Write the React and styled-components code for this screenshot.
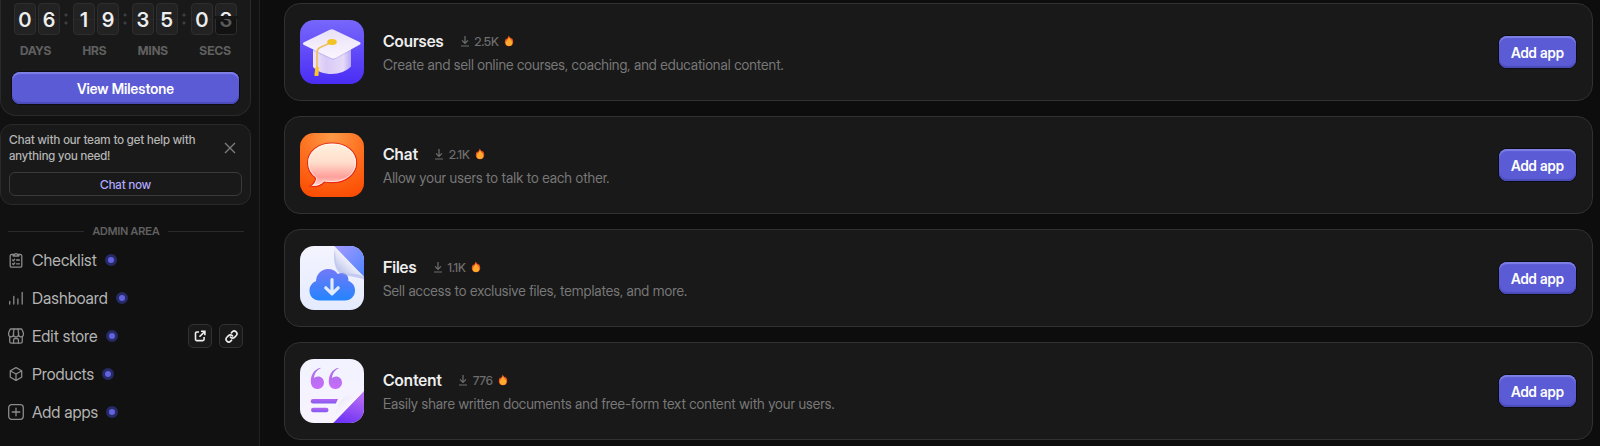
import React from 'react';
import styled, { createGlobalStyle } from 'styled-components';

const GlobalStyle = createGlobalStyle`
	* {
		box-sizing: border-box;
	}
	body {
		margin: 0;
		background: #0d0d0d;
		color: #eeeeee;
		font-family: 'Inter Display', Inter, 'Liberation Sans', sans-serif;
		font-variation-settings: 'opsz' 32;
	}
	button {
		font: inherit;
		font-variation-settings: inherit;
		cursor: pointer;
		padding: 0;
		margin: 0;
	}
	h2, p {
		margin: 0;
	}
	svg {
		display: block;
		flex: none;
	}
`;

const countdown = [
	{ label: 'DAYS', digits: ['0', '6'] },
	{ label: 'HRS', digits: ['1', '9'] },
	{ label: 'MINS', digits: ['3', '5'] },
	{ label: 'SECS', digits: ['0', '3'] },
];

const links = [
	{ name: 'Checklist', Icon: ChecklistIcon },
	{ name: 'Dashboard', Icon: DashboardIcon },
	{ name: 'Edit store', Icon: StoreIcon, tools: true },
	{ name: 'Products', Icon: BoxIcon },
	{ name: 'Add apps', Icon: PlusIcon },
];

const apps = [
	{
		name: 'Courses',
		installs: '2.5K',
		text: 'Create and sell online courses, coaching, and educational content.',
		Art: CoursesArt,
	},
	{
		name: 'Chat',
		installs: '2.1K',
		text: 'Allow your users to talk to each other.',
		Art: ChatArt,
	},
	{
		name: 'Files',
		installs: '1.1K',
		text: 'Sell access to exclusive files, templates, and more.',
		Art: FilesArt,
	},
	{
		name: 'Content',
		installs: '776',
		text: 'Easily share written documents and free-form text content with your users.',
		Art: ContentArt,
	},
];

export default function App() {
	return (
		<React.Fragment>
			<GlobalStyle />
			<Page>
				<Sidebar>
					<Milestone>
						<Clock>
							{countdown.map((unit, i) => (
								<React.Fragment key={unit.label}>
									{i > 0 && <Colon />}
									<Digits>
										{unit.digits.map((d, j) => (
											<Digit key={j} $flipping={i === 3 && j === 1}>
												{d}
											</Digit>
										))}
									</Digits>
								</React.Fragment>
							))}
						</Clock>
						<UnitLabels>
							{countdown.map((unit) => (
								<span key={unit.label}>{unit.label}</span>
							))}
						</UnitLabels>
						<PrimaryButton type="button">View Milestone</PrimaryButton>
					</Milestone>
					<Help>
						<HelpTop>
							<HelpText>
								Chat with our team to get help with anything you need!
							</HelpText>
							<CloseButton type="button" aria-label="Close">
								<svg width="12" height="12" viewBox="0 0 12 12" stroke="#7b7b7b" strokeWidth="1.4">
									<path d="M1 1l10 10M11 1L1 11" />
								</svg>
							</CloseButton>
						</HelpTop>
						<OutlineButton type="button">Chat now</OutlineButton>
					</Help>
					<Divider>ADMIN AREA</Divider>
					<Nav>
						{links.map(({ name, Icon, tools }) => (
							<NavRow key={name}>
								<NavLink href="#">
									<Icon />
									{name}
									<Dot />
								</NavLink>
								{tools && (
									<Tools>
										<ToolButton type="button" aria-label="Open store">
											<OpenIcon />
										</ToolButton>
										<ToolButton type="button" aria-label="Copy link">
											<ChainIcon />
										</ToolButton>
									</Tools>
								)}
							</NavRow>
						))}
					</Nav>
				</Sidebar>
				<Main>
					{apps.map(({ name, installs, text, Art }) => (
						<AppCard key={name}>
							<Art />
							<AppInfo>
								<AppHead>
									<AppName>{name}</AppName>
									<Installs>
										<DownloadIcon />
										{installs}
										<FlameIcon />
									</Installs>
								</AppHead>
								<AppText>{text}</AppText>
							</AppInfo>
							<PrimaryButton type="button">Add app</PrimaryButton>
						</AppCard>
					))}
				</Main>
			</Page>
		</React.Fragment>
	);
}

function NavSvg({ children }) {
	return (
		<svg
			width="16"
			height="16"
			viewBox="0 0 16 16"
			fill="none"
			stroke="#8a8a8a"
			strokeWidth="1.3"
			strokeLinecap="round"
			strokeLinejoin="round"
		>
			{children}
		</svg>
	);
}

function ChecklistIcon() {
	return (
		<NavSvg>
			<path d="M5 2.5H3.5A1.3 1.3 0 0 0 2.2 3.8v10.1a1.3 1.3 0 0 0 1.3 1.3h9a1.3 1.3 0 0 0 1.3-1.3V3.8a1.3 1.3 0 0 0-1.3-1.3H11" />
			<path d="M5.2 4V2.5h1.4a1.5 1.5 0 0 1 2.8 0h1.4V4z" />
			<path d="M4.6 8l.8.8 1.3-1.6M8.6 8h2.8M4.6 11.8l.8.8L6.7 11M8.6 11.8h2.8" />
		</NavSvg>
	);
}

function DashboardIcon() {
	return (
		<NavSvg>
			<path d="M1.7 11.5V14M5.8 6.5V14M9.9 9v5M14.2 2.3V14" />
		</NavSvg>
	);
}

function StoreIcon() {
	return (
		<NavSvg>
			<path d="M3 1h10a1.3 1.3 0 0 1 1.2.9L15.4 5v1.2a2.4 2.4 0 0 1-4.9.3 2.5 2.5 0 0 1-5 0A2.4 2.4 0 0 1 .6 6.2V5l1.2-3.1A1.3 1.3 0 0 1 3 1z" />
			<path d="M5.5 6.5V4.8L6 1M10.5 6.5V4.8L10 1" />
			<path d="M1.7 8.5v5a1.7 1.7 0 0 0 1.7 1.7h9.2a1.7 1.7 0 0 0 1.7-1.7v-5" />
			<path d="M5.6 15v-3.300a1 1 0 0 1 1-1h2.800a1 1 0 0 1 1 1V15" />
		</NavSvg>
	);
}

function BoxIcon() {
	return (
		<NavSvg>
			<path d="M8 1.6l5.7 3.2v6.4L8 14.4l-5.700-3.200V4.800z" />
			<path d="M2.5 5L8 8l5.500-3M8 8v6.300" />
		</NavSvg>
	);
}

function PlusIcon() {
	return (
		<NavSvg>
			<rect x=".7" y=".7" width="14.6" height="14.6" rx="3" />
			<path d="M8 4.200v7.600M4.200 8h7.600" />
		</NavSvg>
	);
}

function OpenIcon() {
	return (
		<svg width="12" height="12" viewBox="0 0 12 12" fill="none" stroke="#eeeeee" strokeWidth="1.6">
			<path d="M5 2H2.800A1.300 1.300 0 0 0 1.500 3.300v6a1.300 1.300 0 0 0 1.300 1.300h6a1.300 1.300 0 0 0 1.300-1.300V7M7 1.300h3.900v3.900M10.600 1.600L5.500 6.800" />
		</svg>
	);
}

function ChainIcon() {
	return (
		<svg
			width="13"
			height="13"
			viewBox="0 0 24 24"
			fill="none"
			stroke="#eeeeee"
			strokeWidth="3"
			strokeLinecap="round"
		>
			<path d="M10 13a5 5 0 0 0 7.540.540l3-3a5 5 0 0 0-7.070-7.070l-1.720 1.710" />
			<path d="M14 11a5 5 0 0 0-7.540-.540l-3 3a5 5 0 0 0 7.070 7.070l1.710-1.710" />
		</svg>
	);
}

function DownloadIcon() {
	return (
		<svg width="10" height="12" viewBox="0 0 10 12" fill="none" stroke="#6e6e6e" strokeWidth="1.2">
			<path d="M5 1v7M2 5.300l3 3 3-3M1 11h8" />
		</svg>
	);
}

function FlameIcon() {
	return (
		<svg width="10" height="12" viewBox="0 0 10 12">
			<path
				d="M4.700.500C5.200 1.800 6.500 2.600 7.300 3.700 7.500 3.400 7.600 3 7.600 2.700 8.700 4 9.300 5.600 9.200 7.300 9 9.700 7.300 11.300 5 11.300S.900 9.700.800 7.400C.7 5.600 1.500 4.300 2.300 3.200c.1.500.300.800.5 1.100C3.400 3.200 4.500 2.100 4.700.500z"
				fill="#f4591f"
			/>
			<path
				d="M5 2.600c.4 1.500 3.200 2.500 3.200 5.200A3.200 3.200 0 0 1 5 11 3.200 3.200 0 0 1 1.800 7.800C1.800 5.400 4.500 4.600 5 2.600z"
				fill="#ffab2e"
			/>
		</svg>
	);
}

function CoursesArt() {
	return (
		<svg width="64" height="64" viewBox="0 0 64 64">
			<defs>
				<linearGradient id="coursesBg" x1="0" y1="0" x2="0" y2="1">
					<stop offset="0" stopColor="#7767fb" />
					<stop offset="1" stopColor="#4a2df5" />
				</linearGradient>
				<linearGradient id="capSide" x1="0" y1="0" x2="1" y2="0">
					<stop offset="0" stopColor="#f0e4fb" />
					<stop offset=".35" stopColor="#d8caf6" />
					<stop offset=".8" stopColor="#e6daf9" />
					<stop offset="1" stopColor="#b9a8f5" />
				</linearGradient>
				<linearGradient id="capTop" x1="0" y1="0" x2="0" y2="1">
					<stop offset="0" stopColor="#e8e1f7" />
					<stop offset="1" stopColor="#fbf5ff" />
				</linearGradient>
			</defs>
			<rect width="64" height="64" rx="14" fill="url(#coursesBg)" />
			<path d="M13 30v17c4 4.500 11 7 18.500 7S47 51 51 46.500V27z" fill="url(#capSide)" />
			<path d="M13 31l20 9 18-9v-5H13z" fill="#a393ea" opacity=".4" />
			<path
				d="M29.800 9.700q2-.9 4 0L59.500 22q2.300 1.300 0 2.700L36 37.700q-2.800 1.400-5.600 0L4 25q-2.300-1.300 0-2.700z"
				fill="url(#capTop)"
			/>
			<path d="M31 22.500L20 27.500q-3 1.600-3 5V50" fill="none" stroke="#edc263" strokeWidth="1.8" />
			<ellipse cx="32" cy="22" rx="4.800" ry="3" fill="#f3c324" />
			<path d="M15.400 47h3.500l-.3 8.500q-2 1-4.300 0z" fill="#f8c52b" />
		</svg>
	);
}

function ChatArt() {
	return (
		<svg width="64" height="64" viewBox="0 0 64 64">
			<defs>
				<radialGradient id="chatBg" cx=".5" cy=".05" r="1">
					<stop offset="0" stopColor="#ff9a47" />
					<stop offset=".5" stopColor="#fd701f" />
					<stop offset="1" stopColor="#fb4c02" />
				</radialGradient>
				<linearGradient id="bubble" x1="0" y1="0" x2="0" y2="1">
					<stop offset="0" stopColor="#fff3df" />
					<stop offset=".45" stopColor="#ffddcb" />
					<stop offset=".78" stopColor="#ffa09b" />
					<stop offset="1" stopColor="#ffd8cf" />
				</linearGradient>
			</defs>
			<rect width="64" height="64" rx="14" fill="url(#chatBg)" />
			<path
				d="M32 10C18 10 7.500 18.500 7.500 29.500c0 7 3 12 8 15.500 0 3.500-2 6-5.500 8 5.500 1.500 11-.3 14.500-4q3.600.7 7.500.7c14.500 0 24.700-8.700 24.700-20S46.500 10 32 10z"
				fill="url(#bubble)"
				stroke="#e92b13"
				strokeWidth="1.2"
			/>
			<path
				d="M32 11.200C19 11.200 8.700 19 8.700 29.500c0 6.500 3 11.500 8 15.200 0 3-1.200 5.400-3.400 7.400 4.500.3 7.800-1.300 10.700-4.300q3.700.8 8 .8c13.500 0 23.500-8.200 23.500-18.800S45.500 11.200 32 11.200z"
				fill="none"
				stroke="#fff"
				strokeOpacity=".6"
			/>
		</svg>
	);
}

function FilesArt() {
	return (
		<svg width="64" height="64" viewBox="0 0 64 64">
			<defs>
				<linearGradient id="filesBg" x1="0" y1="0" x2="0" y2="1">
					<stop offset="0" stopColor="#f4f4ff" />
					<stop offset="1" stopColor="#e4ebfe" />
				</linearGradient>
				<linearGradient id="filesCorner" x1="0" y1="0" x2="1" y2="1">
					<stop offset="0" stopColor="#a59bff" />
					<stop offset="1" stopColor="#4d83ff" />
				</linearGradient>
				<linearGradient id="filesFold" x1=".6" y1=".4" x2=".2" y2=".85">
					<stop offset="0" stopColor="#fafaff" />
					<stop offset=".5" stopColor="#dfe2f6" />
					<stop offset="1" stopColor="#bcc3ea" />
				</linearGradient>
				<linearGradient id="cloud" x1="0" y1="0" x2="0" y2="1">
					<stop offset="0" stopColor="#7379f7" />
					<stop offset="1" stopColor="#2384fe" />
				</linearGradient>
				<clipPath id="filesClip">
					<rect width="64" height="64" rx="14" />
				</clipPath>
			</defs>
			<g clipPath="url(#filesClip)">
				<rect width="64" height="64" fill="url(#filesBg)" />
				<path d="M34 0h30v31z" fill="url(#filesCorner)" />
				<path
					d="M19.500 54.500C13.500 54.500 9.500 50 9.500 44.700c0-4.700 2.800-8.200 6.500-9.400C16.300 28 21.500 23 28 23c4.200 0 7.600 1.700 9.800 5 1.700-.7 3.300-1 4.700-.9 3.700.2 6.300 3.300 5.900 8 4 1.300 6.600 5 6.600 9.400 0 5.500-4 10-10 10z"
					fill="url(#cloud)"
				/>
				<path d="M34.500 4c-1 9-.5 16 3.500 21.500 5 6 14 3.500 26 8v-4L42 10z" fill="#8f9be0" opacity=".45" />
				<path d="M34 0l30 31c-8-5-15-2-21-4.500C34.500 22 36.500 10 34 0z" fill="url(#filesFold)" />
				<path
					d="M32 33.500V47M25.800 41.800l6.200 6 6.200-6"
					fill="none"
					stroke="#e2ebff"
					strokeWidth="3.2"
					strokeLinecap="round"
					strokeLinejoin="round"
				/>
			</g>
		</svg>
	);
}

function ContentArt() {
	return (
		<svg width="64" height="64" viewBox="0 0 64 64">
			<defs>
				<linearGradient id="contentBg" x1="0" y1="0" x2="0" y2="1">
					<stop offset="0" stopColor="#f1f3ff" />
					<stop offset="1" stopColor="#f8f3ff" />
				</linearGradient>
				<linearGradient id="contentCorner" x1=".8" y1="0" x2=".5" y2="1">
					<stop offset="0" stopColor="#bf73f3" />
					<stop offset="1" stopColor="#7236f5" />
				</linearGradient>
				<linearGradient id="contentFold" x1=".1" y1=".1" x2=".5" y2=".5">
					<stop offset="0" stopColor="#d9d2ef" />
					<stop offset=".5" stopColor="#f0ebfa" />
					<stop offset="1" stopColor="#faf7ff" />
				</linearGradient>
				<linearGradient id="quote" x1="0" y1="0" x2="0" y2="1">
					<stop offset="0" stopColor="#a66ee9" />
					<stop offset="1" stopColor="#c86dfb" />
				</linearGradient>
				<linearGradient id="lines" x1="0" y1="0" x2="0" y2="1">
					<stop offset="0" stopColor="#b164f3" />
					<stop offset="1" stopColor="#8558ee" />
				</linearGradient>
				<clipPath id="contentClip">
					<rect width="64" height="64" rx="14" />
				</clipPath>
			</defs>
			<g clipPath="url(#contentClip)">
				<rect width="64" height="64" fill="url(#contentBg)" />
				<path
					d="M20.500 8.800C14 10.500 10.800 16 10.800 22.500c0 4.500 2.600 7.500 6.700 7.500a6.300 6.300 0 0 0 6.500-6.300c0-3.700-2.600-6.200-6-6.200q-2.500 0-4 1.500C14.500 14.500 16.800 11 20.500 9.600z"
					fill="url(#quote)"
				/>
				<path
					d="M38.500 8.800C32 10.500 28.800 16 28.800 22.500c0 4.500 2.600 7.500 6.700 7.500a6.300 6.300 0 0 0 6.500-6.300c0-3.700-2.600-6.200-6-6.200q-2.500 0-4 1.500C32.500 14.500 34.800 11 38.500 9.600z"
					fill="url(#quote)"
				/>
				<path d="M13 40h25l-2.200 4.500H13a2.200 2.200 0 0 1 0-4.500z" fill="url(#lines)" />
				<rect x="11" y="48.800" width="17.500" height="4.500" rx="2.200" fill="url(#lines)" />
				<path d="M64 32v32H33z" fill="url(#contentCorner)" />
				<path d="M33 64c4-5 1-12 5-18 4-7 9-10 15-9.500q6 .2 11-4.500z" fill="url(#contentFold)" />
			</g>
		</svg>
	);
}

const Page = styled.div`
	display: flex;
	min-height: 100vh;
`;

const Sidebar = styled.aside`
	flex: none;
	width: 260px;
	padding-right: 8px;
	background: #111111;
	border-right: 1px solid #222222;
`;

const Milestone = styled.section`
	padding: 3px 11px 11px;
	background: #191919;
	border: 1px solid #2a2a2a;
	border-top: 0;
	border-radius: 0 0 16px 16px;
	display: flex;
	flex-direction: column;
`;

const Clock = styled.div`
	display: flex;
	justify-content: center;
`;

const Digits = styled.div`
	display: flex;
	gap: 2px;
`;

const Digit = styled.span`
	position: relative;
	width: 22px;
	height: 32px;
	border: 1px solid #2e2e2e;
	border-radius: 4px;
	background: linear-gradient(#222222 50%, #2d2d2d 50%, #222222 54%);
	color: #eeeeee;
	font-size: 20px;
	font-weight: 600;
	line-height: 32px;
	text-align: center;
	${(props) =>
		props.$flipping &&
		`
		&::before {
			content: '';
			position: absolute;
			inset: 14px 0 0;
			background: rgba(10, 10, 10, 0.65);
			border-radius: 0 0 3px 3px;
		}
		&::after {
			content: '';
			position: absolute;
			inset: 12px -2px auto;
			height: 3px;
			background: #161616;
		}
	`}
`;

const Colon = styled.span`
	width: 13px;
	height: 32px;
	background:
		radial-gradient(circle at 6px 12px, #3c3f46 1px, transparent 2px),
		radial-gradient(circle at 6px 20px, #3c3f46 1px, transparent 2px);
`;

const UnitLabels = styled.div`
	display: flex;
	justify-content: space-between;
	margin: 8px 0 13px;
	padding: 0 8px;
	color: #606060;
	font-size: 12px;
	font-weight: 700;
	line-height: 16px;
`;

const PrimaryButton = styled.button`
	height: 32px;
	padding: 0 12px;
	flex: none;
	border: 0;
	border-radius: 8px;
	background: #5b5bd6;
	box-shadow:
		inset 0 2px 1px #7f80e4,
		inset 0 -2px 1px #4b4bb8,
		0 0 0 1px #0c0c14;
	color: #ffffff;
	font-size: 14px;
	font-weight: 600;
`;

const Help = styled.section`
	margin-top: 8px;
	padding: 7px 8px 8px;
	background: #191919;
	border: 1px solid #2a2a2a;
	border-radius: 12px;
`;

const HelpTop = styled.div`
	display: flex;
	align-items: center;
	justify-content: space-between;
	padding-right: 6px;
`;

const HelpText = styled.p`
	width: 196px;
	color: #b4b4b4;
	font-size: 12px;
	font-weight: 500;
	line-height: 16px;
`;

const CloseButton = styled.button`
	border: 0;
	background: none;
`;

const OutlineButton = styled.button`
	width: 100%;
	height: 24px;
	margin-top: 8px;
	border: 1px solid #3a3a3a;
	border-radius: 6px;
	background: none;
	color: #b1a9ff;
	font-size: 12px;
	font-weight: 500;
`;

const Divider = styled.div`
	display: flex;
	align-items: center;
	gap: 8px;
	margin: 18px 0 0 8px;
	width: 236px;
	color: #606060;
	font-size: 11px;
	font-weight: 600;
	line-height: 16px;
	&::before,
	&::after {
		content: '';
		flex: 1;
		height: 1px;
		background: #2a2a2a;
	}
`;

const Nav = styled.nav`
	display: flex;
	flex-direction: column;
	gap: 14px;
	padding: 9px 8px 0;
`;

const NavRow = styled.div`
	display: flex;
	align-items: center;
	justify-content: space-between;
	height: 24px;
`;

const NavLink = styled.a`
	display: flex;
	align-items: center;
	gap: 8px;
	color: #b4b4b4;
	font-size: 16px;
	text-decoration: none;
`;

const Dot = styled.span`
	width: 12px;
	height: 12px;
	border: 3px solid #262a65;
	border-radius: 50%;
	background: #6363e0;
`;

const Tools = styled.div`
	display: flex;
	gap: 7px;
`;

const ToolButton = styled.button`
	display: flex;
	align-items: center;
	justify-content: center;
	width: 24px;
	height: 24px;
	border: 1px solid #313131;
	border-radius: 5px;
	background: #191919;
`;

const Main = styled.main`
	flex: 1;
	min-width: 0;
	display: flex;
	flex-direction: column;
	gap: 15px;
	padding: 3px 7px 6px 24px;
`;

const AppCard = styled.article`
	display: flex;
	align-items: center;
	padding: 16px 16px 16px 15px;
	background: #191919;
	border: 1px solid #313131;
	border-radius: 16px;
`;

const AppInfo = styled.div`
	flex: 1;
	margin-left: 19px;
	padding-top: 2px;
`;

const AppHead = styled.div`
	display: flex;
	align-items: center;
	gap: 16px;
`;

const AppName = styled.h2`
	font-size: 16px;
	font-weight: 600;
	line-height: 24px;
`;

const Installs = styled.span`
	display: flex;
	align-items: center;
	gap: 5px;
	color: #6e6e6e;
	font-size: 12px;
	font-weight: 500;
`;

const AppText = styled.p`
	color: #787878;
	font-size: 14px;
	font-weight: 400;
	line-height: 24px;
`;
